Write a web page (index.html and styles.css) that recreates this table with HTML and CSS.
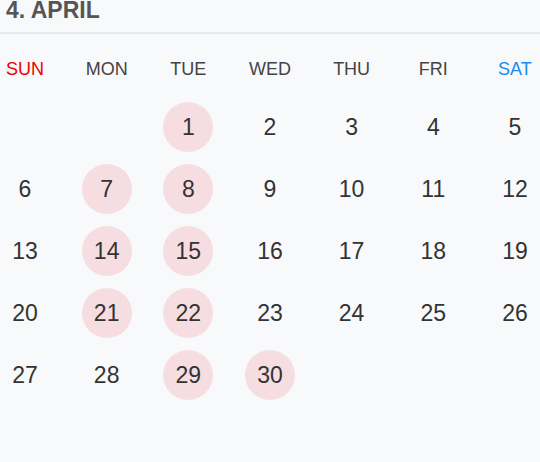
FILE: index.html
```html
<!DOCTYPE html>
<html lang="en">
<head>
<meta charset="utf-8">
<title>April</title>
<link rel="stylesheet" href="styles.css">
</head>
<body>
<div class="month">
  <div class="month-title">4. APRIL</div>
  <div class="weekdays">
    <div class="wd sun">SUN</div>
    <div class="wd">MON</div>
    <div class="wd">TUE</div>
    <div class="wd">WED</div>
    <div class="wd">THU</div>
    <div class="wd">FRI</div>
    <div class="wd sat">SAT</div>
  </div>
  <div class="days">
    <div class="day"></div>
    <div class="day"></div>
    <div class="day mark">1</div>
    <div class="day">2</div>
    <div class="day">3</div>
    <div class="day">4</div>
    <div class="day">5</div>
    <div class="day">6</div>
    <div class="day mark">7</div>
    <div class="day mark">8</div>
    <div class="day">9</div>
    <div class="day">10</div>
    <div class="day">11</div>
    <div class="day">12</div>
    <div class="day">13</div>
    <div class="day mark">14</div>
    <div class="day mark">15</div>
    <div class="day">16</div>
    <div class="day">17</div>
    <div class="day">18</div>
    <div class="day">19</div>
    <div class="day">20</div>
    <div class="day mark">21</div>
    <div class="day mark">22</div>
    <div class="day">23</div>
    <div class="day">24</div>
    <div class="day">25</div>
    <div class="day">26</div>
    <div class="day">27</div>
    <div class="day">28</div>
    <div class="day mark">29</div>
    <div class="day mark">30</div>
  </div>
</div>
</body>
</html>
```
FILE: styles.css
```css
html, body {
  margin: 0;
  padding: 0;
  background: #f8f9fb;
  font-family: "Liberation Sans", Arial, sans-serif;
}
.month {
  width: 540px;
}
.month-title {
  height: 32px;
  padding: 0 6px;
  font-size: 23px;
  line-height: 20px;
  font-weight: bold;
  color: #555555;
  border-bottom: 2px solid #e7e9ec;
}
.weekdays,
.days {
  display: grid;
  grid-template-columns: repeat(7, 50px);
  justify-content: space-between;
}
.weekdays {
  height: 66px;
  padding-top: 2px;
  align-items: center;
}
.wd {
  text-align: center;
  font-size: 18px;
  color: #444444;
}
.wd.sun { color: #ee0000; }
.wd.sat { color: #1a8cf0; }
.days {
  grid-auto-rows: 50px;
  row-gap: 12px;
}
.day {
  display: flex;
  align-items: center;
  justify-content: center;
  border-radius: 50%;
  font-size: 23px;
  color: #333333;
}
.day.mark {
  background: #f6dde1;
}
```
